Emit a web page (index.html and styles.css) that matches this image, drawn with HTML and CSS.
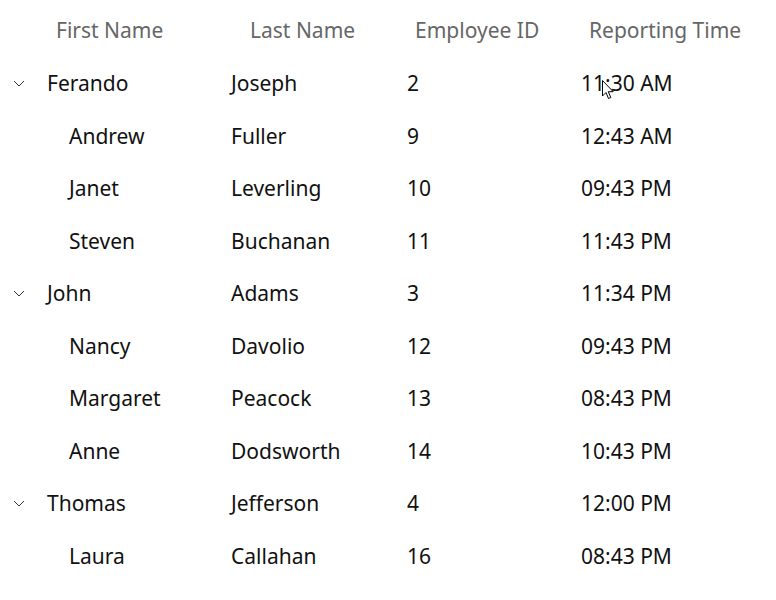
FILE: index.html
```html
<!DOCTYPE html>
<html>
<head>
<meta charset="utf-8">
<link rel="stylesheet" href="styles.css">
</head>
<body>
<div class="grid">
  <div class="row header">
    <div class="cell h1">First Name</div>
    <div class="cell h2">Last Name</div>
    <div class="cell h3">Employee ID</div>
    <div class="cell h4">Reporting Time</div>
  </div>

  <div class="row">
    <div class="cell c1"><span class="exp"><svg width="12" height="7" viewBox="0 0 12 7"><path d="M1 1 L6 6 L11 1" fill="none" stroke="#333" stroke-width="1"/></svg></span>Ferando</div>
    <div class="cell c2">Joseph</div>
    <div class="cell c3">2</div>
    <div class="cell c4">11:30 AM</div>
  </div>
  <div class="row">
    <div class="cell c1 child">Andrew</div>
    <div class="cell c2">Fuller</div>
    <div class="cell c3">9</div>
    <div class="cell c4">12:43 AM</div>
  </div>
  <div class="row">
    <div class="cell c1 child">Janet</div>
    <div class="cell c2">Leverling</div>
    <div class="cell c3">10</div>
    <div class="cell c4">09:43 PM</div>
  </div>
  <div class="row">
    <div class="cell c1 child">Steven</div>
    <div class="cell c2">Buchanan</div>
    <div class="cell c3">11</div>
    <div class="cell c4">11:43 PM</div>
  </div>

  <div class="row">
    <div class="cell c1"><span class="exp"><svg width="12" height="7" viewBox="0 0 12 7"><path d="M1 1 L6 6 L11 1" fill="none" stroke="#333" stroke-width="1"/></svg></span>John</div>
    <div class="cell c2">Adams</div>
    <div class="cell c3">3</div>
    <div class="cell c4">11:34 PM</div>
  </div>
  <div class="row">
    <div class="cell c1 child">Nancy</div>
    <div class="cell c2">Davolio</div>
    <div class="cell c3">12</div>
    <div class="cell c4">09:43 PM</div>
  </div>
  <div class="row">
    <div class="cell c1 child">Margaret</div>
    <div class="cell c2">Peacock</div>
    <div class="cell c3">13</div>
    <div class="cell c4">08:43 PM</div>
  </div>
  <div class="row">
    <div class="cell c1 child">Anne</div>
    <div class="cell c2">Dodsworth</div>
    <div class="cell c3">14</div>
    <div class="cell c4">10:43 PM</div>
  </div>

  <div class="row">
    <div class="cell c1"><span class="exp"><svg width="12" height="7" viewBox="0 0 12 7"><path d="M1 1 L6 6 L11 1" fill="none" stroke="#333" stroke-width="1"/></svg></span>Thomas</div>
    <div class="cell c2">Jefferson</div>
    <div class="cell c3">4</div>
    <div class="cell c4">12:00 PM</div>
  </div>
  <div class="row">
    <div class="cell c1 child">Laura</div>
    <div class="cell c2">Callahan</div>
    <div class="cell c3">16</div>
    <div class="cell c4">08:43 PM</div>
  </div>
</div>
<svg class="cursor" width="13" height="20" viewBox="0 0 13 20"><path d="M0.5 0.5 L0.5 16 L4 12.5 L6.5 18.5 L8.8 17.5 L6.3 11.7 L11.2 11.7 Z" fill="#fff" stroke="#000" stroke-width="1" stroke-linejoin="round"/></svg>
</body>
</html>
```

FILE: styles.css
```css
html, body {
  margin: 0;
  padding: 0;
  background: #fff;
}
body {
  font-family: "Segoe UI", "Noto Sans", "Open Sans", sans-serif;
  font-size: 21px;
  color: #111;
  position: relative;
  width: 776px;
  height: 600px;
  overflow: hidden;
}
.grid {
  display: flex;
  flex-direction: column;
}
.row {
  display: grid;
  grid-template-columns: 223px 176px 174px 1fr;
  height: 52.5px;
  align-items: center;
}
.header {
  height: 57px;
  color: #666;
  padding-top: 2px;
  box-sizing: border-box;
}
.cell {
  white-space: nowrap;
  display: flex;
  align-items: center;
}
.h1 { padding-left: 56px; }
.h2 { padding-left: 27px; }
.h3 { padding-left: 16px; }
.h4 { padding-left: 16px; }
.c1 { padding-left: 13px; }
.c1.child { padding-left: 69px; }
.c2 { padding-left: 8px; }
.c3 { padding-left: 8px; }
.c4 { padding-left: 8px; }
.exp {
  width: 34px;
  display: flex;
  align-items: center;
}
.cursor {
  position: absolute;
  left: 602px;
  top: 80px;
}
```
